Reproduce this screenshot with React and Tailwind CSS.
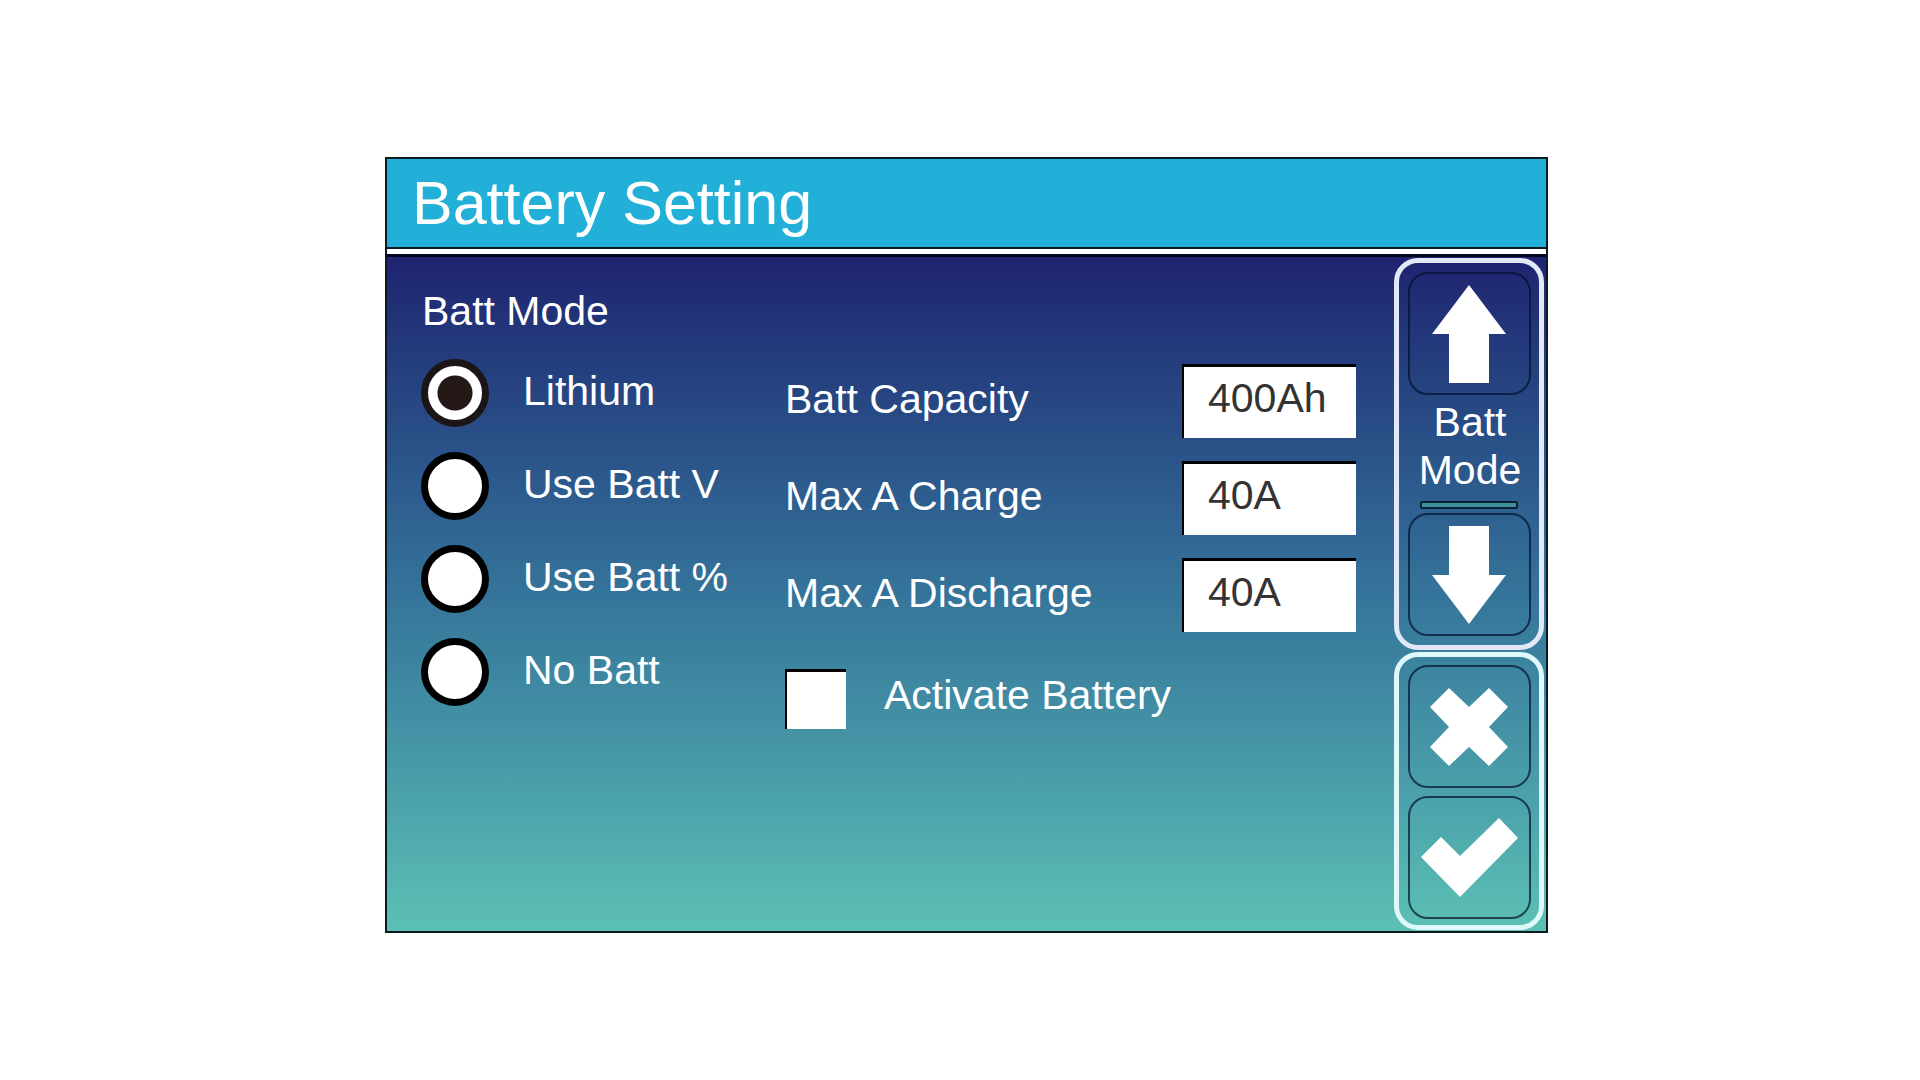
import { useState } from "react";

const MODES = ["Lithium", "Use Batt V", "Use Batt %", "No Batt"];

const FIELDS = [
  { id: "capacity", label: "Batt Capacity" },
  { id: "charge", label: "Max A Charge" },
  { id: "discharge", label: "Max A Discharge" },
];

function ModeRadio({ id, label, checked, onChange }) {
  return (
    <div className="flex items-center gap-[34px]">
      <input
        id={id}
        type="radio"
        name="battMode"
        checked={checked}
        onChange={onChange}
        className="size-[68px] shrink-0 appearance-none rounded-full border-[7px] border-black bg-white checked:border-[#1c1516] checked:bg-[radial-gradient(circle,#231815_17px,#ffffff_18px)]"
      />
      <label htmlFor={id} className="pb-1 whitespace-nowrap">
        {label}
      </label>
    </div>
  );
}

function ValueField({ id, label, value, onChange }) {
  return (
    <div className="flex items-center justify-between">
      <label htmlFor={id} className="pb-1 whitespace-nowrap">
        {label}
      </label>
      <input
        id={id}
        type="text"
        value={value}
        onChange={onChange}
        className="h-[74px] w-[174px] border-t-3 border-l-2 border-black bg-white pb-2 pl-6 text-[#333333] outline-none"
      />
    </div>
  );
}

function PadButton({ label, onClick, children }) {
  return (
    <button
      type="button"
      aria-label={label}
      onClick={onClick}
      className="flex size-[123px] items-center justify-center rounded-[20px] border-2 border-[#04102c]/70"
    >
      {children}
    </button>
  );
}

export default function App() {
  const [mode, setMode] = useState(0);
  const [active, setActive] = useState(false);
  const [values, setValues] = useState({
    capacity: "400Ah",
    charge: "40A",
    discharge: "40A",
  });

  function stepMode(step) {
    setMode((mode + step + MODES.length) % MODES.length);
  }

  return (
    <main className="flex min-h-screen items-start justify-center bg-white pt-[157px] pl-[13px] font-['Liberation_Sans',Arial,sans-serif] text-[41px] leading-[48px] text-white">
      <div className="w-full max-w-[1163px] border-2 border-[#0a1a20]">
        <header className="border-b-2 border-[#0a1a20] bg-[#22b0d8] px-[25px] pt-[9px] pb-[9px]">
          <h1 className="text-[61px] leading-[70px]">Battery Setting</h1>
        </header>

        <form
          onSubmit={(e) => e.preventDefault()}
          className="mt-[5px] flex border-t-3 border-[#05061f] bg-linear-to-b from-[#1f2370] via-[#35749a] to-[#5cc0b4] pr-[2px] pl-[34px]"
        >
          <fieldset className="w-[364px] shrink-0 pt-[30px]">
            <legend className="float-left w-full pl-px">Batt Mode</legend>
            <div className="clear-both flex flex-col gap-[25px] pt-6">
              {MODES.map((name, i) => (
                <ModeRadio
                  key={name}
                  id={`mode-${i}`}
                  label={name}
                  checked={mode === i}
                  onChange={() => setMode(i)}
                />
              ))}
            </div>
          </fieldset>

          <section className="flex flex-1 flex-col gap-[23px] pt-[107px] pr-[38px]">
            {FIELDS.map((field) => (
              <ValueField
                key={field.id}
                id={field.id}
                label={field.label}
                value={values[field.id]}
                onChange={(e) => setValues({ ...values, [field.id]: e.target.value })}
              />
            ))}

            <div className="flex items-center gap-[38px] pt-[14px]">
              <input
                id="activate"
                type="checkbox"
                checked={active}
                onChange={(e) => setActive(e.target.checked)}
                className="h-[60px] w-[61px] appearance-none border-t-3 border-l-2 border-black bg-white checked:bg-[#231815]"
              />
              <label htmlFor="activate" className="pb-2">
                Activate Battery
              </label>
            </div>
          </section>

          <aside className="flex w-[150px] shrink-0 flex-col gap-[2px] pt-[1px] pb-[1px]">
            <div className="flex flex-col items-center rounded-[24px] border-[5px] border-[#e2e8f8] pt-[9px] pb-[9px]">
              <PadButton label="Previous mode" onClick={() => stepMode(-1)}>
                <svg viewBox="0 0 74 98" className="h-[98px] w-[74px] fill-white">
                  <path d="M37 0 74 49H57V98H17V49H0Z" />
                </svg>
              </PadButton>
              <p className="pt-[3px] pb-[7px] pl-[2px] text-center">
                Batt
                <br />
                Mode
              </p>
              <div className="mb-1 h-[8px] w-[98px] rounded-[2px] border-2 border-[#062233] bg-[#3f8f9c]" />
              <PadButton label="Next mode" onClick={() => stepMode(1)}>
                <svg viewBox="0 0 74 98" className="h-[98px] w-[74px] fill-white">
                  <path d="M37 98 74 49H57V0H17V49H0Z" />
                </svg>
              </PadButton>
            </div>

            <div className="flex flex-col items-center gap-2 rounded-[24px] border-[5px] border-[#e0f8fa] pt-2 pb-[6px]">
              <PadButton label="Cancel">
                <svg viewBox="0 0 78 78" className="size-[78px] fill-white">
                  <path d="M19 0 39 19 59 0 78 19 59 39 78 59 59 78 39 59 19 78 0 59 19 39 0 19Z" />
                </svg>
              </PadButton>
              <PadButton label="Confirm">
                <svg viewBox="0 0 97 79" className="h-[79px] w-[97px] fill-white">
                  <path d="M0 39 20 19 39 38 78 0 97 20 39 79Z" />
                </svg>
              </PadButton>
            </div>
          </aside>
        </form>
      </div>
    </main>
  );
}
